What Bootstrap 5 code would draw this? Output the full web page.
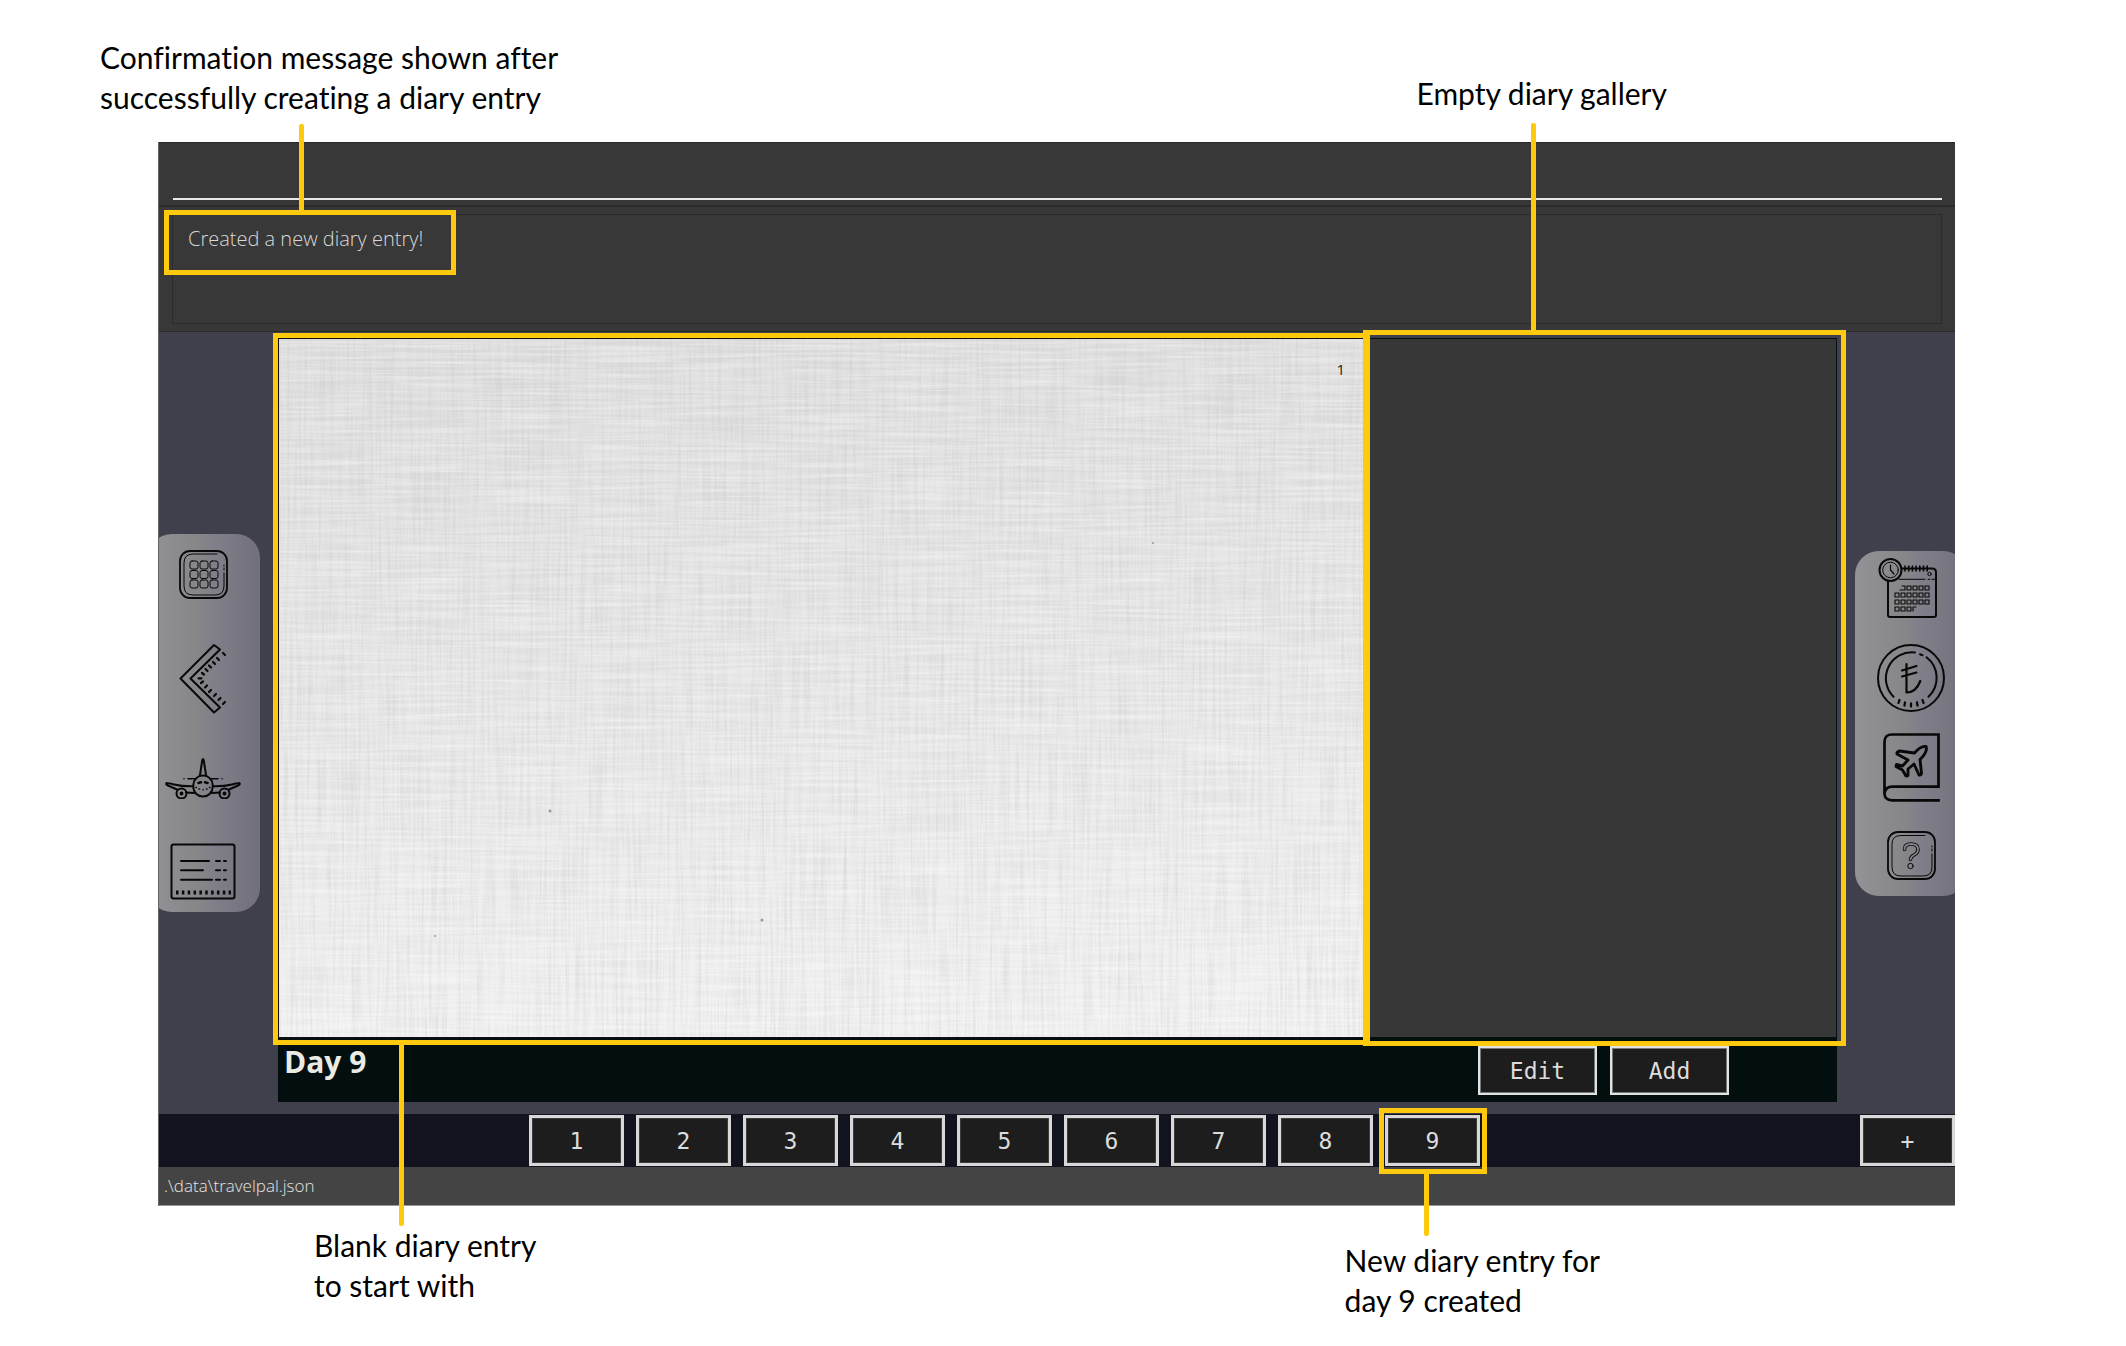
<!DOCTYPE html>
<html lang="en">
<head>
<meta charset="utf-8">
<meta name="viewport" content="width=device-width, initial-scale=1">
<title>TravelPal diary</title>
<link href="https://cdn.jsdelivr.net/npm/bootstrap@5.3.0/dist/css/bootstrap.min.css" rel="stylesheet">
<style>
  :root { --mark: #ffc90e; --panel: #383838; --edge: #2b2b2b; --side: #403f4c; }
  body { background: #fff; color: #000; font-family: Lato, sans-serif; }
  .caption-text { font-size: 30px; line-height: 40px; white-space: nowrap; margin: 0; font-variant-ligatures: none; }
  .captions-top { padding: 37px 459px 25px 100px; }
  .captions-bottom { padding: 19px 526px 40px 314px; }
  .lowered { margin-top: 15px; }

  .app-window { margin: 0 171px 0 158px; background: var(--side); border-left: 1px solid #66666a; font-family: "Open Sans", sans-serif; }
  .command-pane { background: var(--panel); border-top: 1px solid var(--edge); border-bottom: 2px solid var(--edge); padding: 11px 13px 5px 14px; }
  .command-input { display: block; width: 100%; height: 46px; color: #fff; background: transparent; border: 0; border-bottom: 2px solid #e8e8e8; border-radius: 0; padding: 0 8px; outline: 0; }
  .result-pane { background: var(--panel); border-bottom: 1px solid var(--edge); padding: 7px 13px; }
  .result-box { border: 1px solid var(--edge); height: 110px; color: #d8d8d8; font-size: 20px; font-weight: 300; line-height: 30px; padding: 9px 15px; }

  .marked { position: relative; }
  .frame { position: absolute; border: 5px solid var(--mark); pointer-events: none; z-index: 2; }
  .leader { position: absolute; width: 5px; background: var(--mark); border-radius: 2px; z-index: 3; }
  .frame-result { inset: -14px auto auto -24px; width: 292px; height: 65px; }
  .frame-result .leader { left: 130px; bottom: 100%; height: 91px; }
  .frame-entry { inset: -6px -5px -8px -6px; }
  .frame-entry .leader { left: 121px; top: 100%; height: 186px; }
  .frame-gallery { inset: -9px -10px -9px -2px; border-left-width: 7px; }
  .frame-gallery .leader { left: 161px; bottom: 100%; height: 212px; }
  .frame-day { inset: -7px -7px -8px -6px; }
  .frame-day .leader { left: 40px; top: 100%; height: 67px; }

  .side-col { width: 119px; overflow: hidden; flex: none; }
  .side-col.right { width: 118px; }
  .side-menu { width: 112px; border-radius: 24px; background: linear-gradient(90deg, #939397, #868689 45%, #7f7e89 60%, #706f7a); }
  .side-col.left .side-menu { margin-left: -11px; padding: 16px 2px 12px 0; gap: 44px; }
  .side-col.right .side-menu { margin-left: 18px; padding: 7px 0 16px; }
  .icon-btn { border: 0; background: none; padding: 0; display: block; line-height: 0; }
  .icon-btn svg { fill: none; stroke: #080808; stroke-width: 2; stroke-linecap: round; stroke-linejoin: round; display: block; }

  .diary { padding: 6px 0 12px; }
  .diary-book { background: #030f0e; }
  .entry-page { flex: 1; height: 700px; background: #e6e6e6; border: 1px solid #101014; color: #222; }
  .paper { position: absolute; inset: 0; width: 100%; height: 100%; }
  .page-no { position: relative; font-size: 15px; line-height: 20px; padding: 20px 18px; text-align: right; }
  .gallery { width: 473px; height: 700px; background: #373737; border: 1px solid #06100f; }
  .day-bar { height: 64px; padding: 8px 108px 0 6px; }
  .day-title { color: #e9ebe4; font-size: 30px; font-weight: 700; line-height: 32px; margin: 0; }
  .key { font-family: "DejaVu Sans Mono", monospace; font-size: 23px; line-height: 30px; color: #dcdcdc; background: #1d1d1d; border: 2px solid #e2e2e2; box-shadow: inset 0 0 0 1px #777; border-radius: 0; padding: 0; }
  .key-action { width: 119px; height: 49px; }
  .key-day { width: 95px; height: 51px; border-width: 3px; border-color: #d8d8d8; box-shadow: inset 0 0 0 1px #3c3c3c; }
  .key-row { background: #11131f; padding: 1px 0; }
  .days { gap: 12px; padding-left: 370px; }
  .actions { gap: 13px; }
  .status { background: #444; color: #e4e4e4; font-size: 17px; font-weight: 300; line-height: 24px; padding: 7px 5px; border-bottom: 1px solid #999; }
</style>
</head>
<body>
<header class="captions-top d-flex justify-content-between align-items-end">
  <p class="caption-text">Confirmation message shown after<br>successfully creating a diary entry</p>
  <p class="caption-text mb-1">Empty diary gallery</p>
</header>

<main class="app-window">
  <div class="command-pane"><input class="command-input" type="text" aria-label="Command"></div>
  <div class="result-pane">
    <div class="result-box"><span class="marked d-inline-block">Created a new diary entry!<span class="frame frame-result"><span class="leader"></span></span></span></div>
  </div>

  <div class="d-flex align-items-stretch">
    <nav class="side-col left d-flex align-items-center" aria-label="Main">
      <div class="side-menu d-flex flex-column align-items-center flex-shrink-0">
        <button class="icon-btn" type="button" aria-label="Menu">
          <svg width="49" height="49" viewBox="0 0 49 49"><rect x="1" y="1" width="47" height="47" rx="10" stroke-width="1.8"/><path d="M38 4H14Q5 4 5 13V36Q5 45 14 45H36Q45 45 45 36V23M45 20V18M45 16V15" stroke-width="1"/><g stroke-width="1"><rect x="11" y="11" width="8" height="8" rx="2"/><rect x="21" y="11" width="8" height="8" rx="2"/><rect x="31" y="11" width="8" height="8" rx="2"/><rect x="11" y="20.500" width="8" height="8" rx="2"/><rect x="21" y="20.500" width="8" height="8" rx="2"/><rect x="31" y="20.500" width="8" height="8" rx="2"/><rect x="11" y="30" width="8" height="8" rx="2"/><rect x="21" y="30" width="8" height="8" rx="2"/><rect x="31" y="30" width="8" height="8" rx="2"/></g></svg>
        </button>
        <button class="icon-btn" type="button" aria-label="Back">
          <svg width="49" height="71" viewBox="0 0 49 71"><path d="M1.500 35.500L35 2L41 6.500L11.500 35.500L41 64.500L35 69.500Z"/><path d="M44 10l2 2M38 15l2 2M34 19l2 2M30 22.500l2 2M26.500 26l2 2M23 30l2 1.500M19.500 35.300h3M22 40l2-1.500M26 44.500l2-2M30 49l2-2M35 53l2-2M39.500 57l2-2M44 61l2-2" stroke-width="2.200"/></svg>
        </button>
        <button class="icon-btn" type="button" aria-label="Trips">
          <svg width="76" height="41" viewBox="0 0 76 41"><rect x="28.300" y="17.600" width="19.400" height="21" rx="9.500"/><path d="M35 17L37.300 2Q38 0 38.700 2L41 17"/><path d="M28 28.300Q17 28.500 9 26.500Q3 25 1.500 25Q.5 26.500 3 27.500L12 31.500M48 28.300Q59 28.500 67 26.500Q73 25 74.500 25Q75.500 26.500 73 27.500L64 31.500M21 34.500L29 35M55 34.500L47 35"/><circle cx="16.500" cy="35.500" r="5"/><circle cx="59.500" cy="35.500" r="5"/><circle cx="16.500" cy="35.500" r="1"/><circle cx="59.500" cy="35.500" r="1"/><path d="M23 20.700H31M45 20.700H53M19 20.700h.1M57 20.700h.1" stroke-width="1.500"/><path d="M33.500 25L36 24.300M42.500 25L40 24.300" stroke-width="2.600"/><path d="M31 29.500h.5M34 31h.5M38 31.700h.1M41.500 31h.5M44.500 29.500h.5" stroke-width="1.500"/></svg>
        </button>
        <button class="icon-btn" type="button" aria-label="Details">
          <svg width="66" height="57" viewBox="0 0 66 57"><rect x="1.500" y="1.500" width="63" height="54" rx="2"/><path d="M11 18H39M46 18H50M54 18H56M11 27.300H33M46 27.300H50M54 27.300H56M11 36.700H42M46 36.700H50M54 36.700H56"/><path d="M6 49.500H61" stroke-width="4" stroke-dasharray="2.500 3.350" stroke-linecap="butt"/></svg>
        </button>
      </div>
    </nav>

    <section class="diary flex-grow-1">
      <div class="diary-book">
        <div class="d-flex">
          <article class="entry-page marked">
            <svg class="paper" aria-hidden="true">
              <defs>
                <filter id="weave-v" x="0" y="0" width="100%" height="100%"><feTurbulence type="fractalNoise" baseFrequency="0.35 0.01" numOctaves="3" seed="4"/><feColorMatrix values="0 0 0 0 .5  0 0 0 0 .5  0 0 0 0 .5  .7 0 0 0 -.28"/></filter>
                <filter id="weave-h" x="0" y="0" width="100%" height="100%"><feTurbulence type="fractalNoise" baseFrequency="0.01 0.35" numOctaves="3" seed="9"/><feColorMatrix values="0 0 0 0 1  0 0 0 0 1  0 0 0 0 1  .8 0 0 0 -.26"/></filter>
                <linearGradient id="shade" x1=".6" y1="0" x2=".7" y2="1"><stop offset="0" stop-color="#dcdcdc"/><stop offset=".45" stop-color="#e4e4e4"/><stop offset="1" stop-color="#f0f0f0"/></linearGradient>
              </defs>
              <rect width="100%" height="100%" fill="url(#shade)"/>
              <rect width="100%" height="100%" filter="url(#weave-v)"/>
              <rect width="100%" height="100%" filter="url(#weave-h)"/>
              <g fill="#999"><circle cx="271" cy="472" r="1.500"/><circle cx="483" cy="581" r="1.500"/><circle cx="156" cy="597" r="1"/><circle cx="874" cy="204" r="1"/></g>
            </svg>
            <div class="page-no">1</div>
            <span class="frame frame-entry"><span class="leader"></span></span>
          </article>
          <aside class="gallery marked" aria-label="Gallery"><span class="frame frame-gallery"><span class="leader"></span></span></aside>
        </div>
        <div class="day-bar d-flex justify-content-between align-items-start">
          <h1 class="day-title">Day 9</h1>
          <div class="actions d-flex">
            <button class="key key-action" type="button">Edit</button>
            <button class="key key-action" type="button">Add</button>
          </div>
        </div>
      </div>
    </section>

    <nav class="side-col right d-flex align-items-center" aria-label="Tools">
      <div class="side-menu d-flex flex-column align-items-center flex-shrink-0">
        <button class="icon-btn" type="button" aria-label="Itinerary">
          <svg width="66" height="86" viewBox="0 0 66 86"><circle cx="12.500" cy="12" r="11"/><circle cx="12.500" cy="12" r="7.800" stroke-width="1"/><path d="M12.500 7V12L16 16" stroke-width="1.200"/><path d="M24 10.500H54Q58 10.500 58 14.500V57Q58 59 56 59H12Q10 59 10 57V23"/><path d="M27 8v5M30.700 8v5M34.400 8v5M38.100 8v5M41.800 8v5M45.500 8v5M49.200 8v5" stroke-width="1.600"/><path d="M21 21.300H47M50 21.300h2M54 21.300h3" stroke-width="1"/><circle cx="51.500" cy="16" r="1.700" stroke-width="1"/><path stroke-width="1.100" d="M24 28h3v4h-5M29 28h4v4h-4zM35 28h4v4h-4zM41 28h4v4h-4zM47 28h4v4h-4zM17 35h4v4h-4zM23 35h4v4h-4zM29 35h4v4h-4zM35 35h4v4h-4zM41 35h4v4h-4zM47 35h4v4h-4zM17 42h4v4h-4zM23 42h4v4h-4zM29 42h4v4h-4zM35 42h4v4h-4zM41 42h4v4h-4zM47 42h4v4h-4zM17 49h4v4h-4zM23 49h4v4h-4zM29 49h4v4h-4zM35 53v-4h3"/></svg>
        </button>
        <button class="icon-btn" type="button" aria-label="Expenses">
          <svg width="68" height="89" viewBox="0 0 68 89"><circle cx="34" cy="34" r="33"/><path d="M16.500 52.700A26 26 0 0 1 38 8.500M43 10.200l2.500 1M49.500 13.200A26 26 0 0 1 51.500 52.700"/><path d="M22.500 56l-1 3M28 58.500l-.5 3M34 59.500v3M40 58.500l.5 3M45.500 56l1 3" stroke-width="2.300"/><path d="M29.500 20V48.500Q39 48.500 43.300 37M25 26.500L39.500 22M25 32.500L39.500 28.500" stroke-width="2.200"/></svg>
        </button>
        <button class="icon-btn" type="button" aria-label="Diary">
          <svg width="57" height="98" viewBox="0 0 57 98"><path d="M55.500 53.700V1.500H9Q1.500 1.500 1.500 9V60Q1.500 67.300 9 67.300H55.500M55.500 53.700H9Q3 53.700 1.500 60" stroke-width="2.700" stroke-linecap="square" stroke-linejoin="miter"/><path stroke-width="2.900" d="M43 13.500Q38 12.500 31.500 20L16.500 18Q13.500 19 14 21L25 27L19.500 33L13.500 31.500L13 33.500L19.500 37L23 43L25 42.500L25 36L31 31L36 42Q38 42.500 38.500 40.500L37 26.500Q45 19 43 13.500Z"/></svg>
        </button>
        <button class="icon-btn" type="button" aria-label="Help">
          <svg width="49" height="49" viewBox="0 0 49 49"><rect x="1" y="1" width="47" height="47" rx="10" stroke-width="1.800"/><path d="M38 4.500H14Q5 4.500 5 13V36Q5 45 14 45H36Q45 45 45 36V23M45 20V18M45 16V15" stroke-width="1"/><path d="M17.500 18.500Q17.500 13 24 13Q31 13 31 18.500Q31 22 27 24Q23.500 26 23.500 28.500" stroke-width="3.600"/><path d="M17.500 18.500Q17.500 13 24 13Q31 13 31 18.500Q31 22 27 24Q23.500 26 23.500 28.500" stroke="#828289" stroke-width="1.800"/><circle cx="23.500" cy="35" r="2.700" stroke-width="1"/></svg>
        </button>
      </div>
    </nav>
  </div>

  <div class="key-row d-flex justify-content-between">
    <div class="days d-flex">
      <button class="key key-day" type="button">1</button>
      <button class="key key-day" type="button">2</button>
      <button class="key key-day" type="button">3</button>
      <button class="key key-day" type="button">4</button>
      <button class="key key-day" type="button">5</button>
      <button class="key key-day" type="button">6</button>
      <button class="key key-day" type="button">7</button>
      <button class="key key-day" type="button">8</button>
      <div class="marked"><button class="key key-day" type="button">9</button><span class="frame frame-day"><span class="leader"></span></span></div>
    </div>
    <button class="key key-day" type="button" aria-label="Add day">+</button>
  </div>
  <div class="status">.\data\travelpal.json</div>
</main>

<footer class="captions-bottom d-flex justify-content-between align-items-start">
  <p class="caption-text">Blank diary entry<br>to start with</p>
  <p class="caption-text lowered">New diary entry for<br>day 9 created</p>
</footer>
<script src="https://cdn.jsdelivr.net/npm/bootstrap@5.3.0/dist/js/bootstrap.bundle.min.js"></script>
</body>
</html>
